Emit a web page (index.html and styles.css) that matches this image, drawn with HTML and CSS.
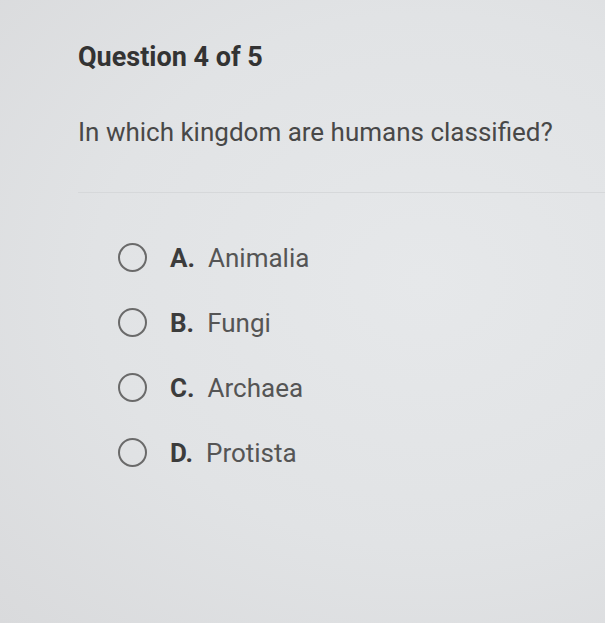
FILE: index.html
```
<!DOCTYPE html>
<html lang="en">
<head>
    <meta charset="UTF-8">
    <meta name="viewport" content="width=device-width, initial-scale=1.0">
    <title>Question 4 of 5</title>
    <link rel="stylesheet" href="styles.css">
</head>
<body>
    <div class="quiz">
        <h1 class="quiz-title">Question 4 of 5</h1>
        <p class="quiz-question">In which kingdom are humans classified?</p>
        <hr class="quiz-divider">

        <ul class="choices">
            <li class="choice"><span class="radio"></span><b>A.</b><span class="choice-text">Animalia</span></li>
            <li class="choice"><span class="radio"></span><b>B.</b><span class="choice-text">Fungi</span></li>
            <li class="choice"><span class="radio"></span><b>C.</b><span class="choice-text">Archaea</span></li>
            <li class="choice"><span class="radio"></span><b>D.</b><span class="choice-text">Protista</span></li>
        </ul>
    </div>
</body>
</html>
```
FILE: styles.css
```
html, body {
    height: 100%;
}
body {
    margin: 0;
    background: radial-gradient(ellipse at 70% 45%, #e6e8ea 0%, #e1e3e5 55%, #d9dadc 100%);
    font-family: Roboto, "Liberation Sans", sans-serif;
    color: #444;
}

.quiz {
    padding: 41px 0 0 78px;
}
.quiz-title {
    margin: 0;
    font-size: 27px;
    font-weight: bold;
    color: #333;
}
.quiz-question {
    margin: 44px 0 0;
    font-size: 26px;
    color: #484848;
}
.quiz-divider {
    margin: 45px 0 0;
    border: 0;
    border-top: 1px solid #d6d8da; /* very faint line */
}

.choices {
    list-style: none;
    margin: 32px 0 0 40px;
    padding: 0;
}
.choice {
    display: flex;
    align-items: center;
    height: 65px;
    font-size: 26px;
}
.radio {
    width: 25px;
    height: 25px;
    border: 2.5px solid #6a6a6a;
    border-radius: 50%;
    margin-right: 23px;
}
.choice b {
    color: #3c3c3c;
    margin-right: 13px;
}
.choice-text {
    color: #555;
}
```
